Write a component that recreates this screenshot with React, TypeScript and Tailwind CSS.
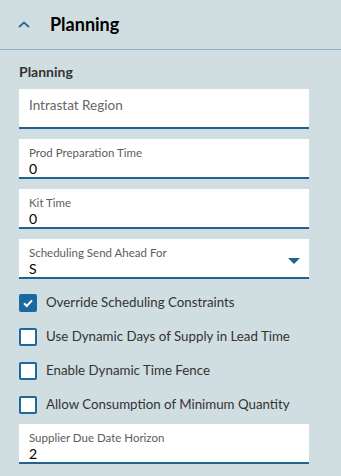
import React from "react";

const font = { fontFamily: 'Lato, "Noto Sans", sans-serif' };

function TextField({ label, value }: { label: string; value: string }) {
  return (
    <div className="h-[40px] bg-white border-b-2 border-[#1f6391] px-[10px] pt-[6px]">
      <div className="text-[11.5px] leading-[15px] text-[#5c5c5c]">{label}</div>
      <div className="text-[14px] leading-[18px] text-black">{value}</div>
    </div>
  );
}

function Checkbox({ label, checked }: { label: string; checked?: boolean }) {
  return (
    <div className="flex items-center h-[18px] gap-[9px]">
      <div
        className={
          "w-[18px] h-[18px] rounded-[2px] border-2 border-[#1a6aa0] flex items-center justify-center " +
          (checked ? "bg-[#1a6aa0]" : "bg-white")
        }
      >
        {checked && (
          <svg width="12" height="12" viewBox="0 0 12 12">
            <path d="M2 6.3 L4.8 9 L10 3.3" stroke="white" strokeWidth="2" fill="none" />
          </svg>
        )}
      </div>
      <span className="text-[13.3px] text-[#333]">{label}</span>
    </div>
  );
}

export default function App() {
  return (
    <div className="w-[341px] h-[476px] bg-[#d0dde1] overflow-hidden" style={font}>
      <div className="h-[50px] flex items-center border-b border-[#8fb3c6]">
        <svg width="14" height="10" viewBox="0 0 14 10" className="ml-[17px]">
          <path d="M2 7 L7 2.5 L12 7" stroke="#2a6c9c" strokeWidth="2" fill="none" />
        </svg>
        <span className="ml-[19px] text-[18px] font-bold text-black">Planning</span>
      </div>
      <div className="px-[19px] w-[290px] box-content">
        <div className="pt-[13px] h-[39px] text-[14px] font-bold text-[#333] leading-[18px]">Planning</div>
        <div className="h-[40px] bg-white border-b-2 border-[#1f6391] px-[10px] flex items-center">
          <span className="text-[13.5px] text-[#666] -mt-[5px]">Intrastat Region</span>
        </div>
        <div className="mt-[10px]">
          <TextField label="Prod Preparation Time" value="0" />
        </div>
        <div className="mt-[10px]">
          <TextField label="Kit Time" value="0" />
        </div>
        <div className="mt-[10px] relative">
          <TextField label="Scheduling Send Ahead For" value="S" />
          <svg width="12" height="7" viewBox="0 0 12 7" className="absolute right-[9px] top-[19px]">
            <path d="M0 0 L12 0 L6 6 Z" fill="#1f6391" />
          </svg>
        </div>
        <div className="mt-[15px] flex flex-col gap-[16px]">
          <Checkbox label="Override Scheduling Constraints" checked />
          <Checkbox label="Use Dynamic Days of Supply in Lead Time" />
          <Checkbox label="Enable Dynamic Time Fence" />
          <Checkbox label="Allow Consumption of Minimum Quantity" />
        </div>
        <div className="mt-[10px]">
          <TextField label="Supplier Due Date Horizon" value="2" />
        </div>
      </div>
    </div>
  );
}
